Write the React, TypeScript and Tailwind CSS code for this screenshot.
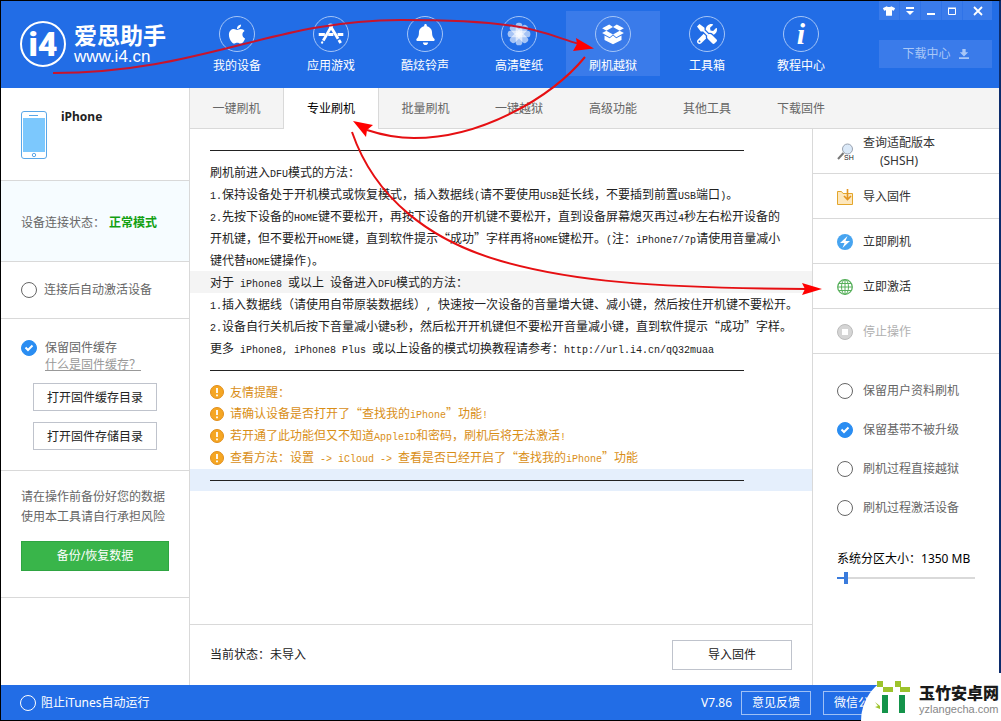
import React, { useState } from "react";
import { FaApple, FaBell, FaTools, FaTshirt } from "react-icons/fa";

const AppStoreIcon = () => (
	<svg viewBox="0 0 36 36" className="h-9 w-9" stroke="white" fill="none">
		<path d="M16 7.500 25.500 23" strokeWidth="3" />
		<path d="M26.300 24.300 28.300 27.600" strokeWidth="3" />
		<path d="M19.800 7.500 9.800 25" strokeWidth="3" />
		<path d="M9.200 26 8 28" strokeWidth="2" />
		<path d="M5 18.500H11.500M15 18.500H20.500M25 18.500H31" strokeWidth="3" />
	</svg>
);

const FlowerIcon = () => (
	<svg viewBox="0 0 36 36" className="h-9 w-9" fill="white">
		{[0, 45, 90, 135, 180, 225, 270, 315].map((angle) => (
			<rect
				key={angle}
				x="14.500"
				y="6"
				width="7"
				height="12"
				rx="3"
				fillOpacity="0.600"
				transform={`rotate(${angle} 18 18)`}
			/>
		))}
	</svg>
);

const BoxIcon = () => (
	<svg viewBox="0 0 36 36" className="h-9 w-9" fill="white">
		<path d="M6.500 12 14 8l4 2.500-7 4z" />
		<path d="M29.500 12 22 8l-4 2.500 7 4z" />
		<path d="M6.500 17 11 14.500l7 4-3.500 3z" />
		<path d="M29.500 17 25 14.500l-7 4 3.500 3z" />
		<path d="M9 19.500l5.500 3 3.500-3 3.500 3 5.500-3v4.800L18 28.800l-9-4.500z" />
	</svg>
);

const InfoIcon = () => (
	<span className="font-['Liberation_Serif',serif] text-3xl leading-none font-bold italic">i</span>
);

const navItems = [
	{ label: "我的设备", icon: <FaApple size={22} /> },
	{ label: "应用游戏", icon: <AppStoreIcon /> },
	{ label: "酷炫铃声", icon: <FaBell size={21} /> },
	{ label: "高清壁纸", icon: <FlowerIcon /> },
	{ label: "刷机越狱", icon: <BoxIcon />, active: true },
	{ label: "工具箱", icon: <FaTools size={20} /> },
	{ label: "教程中心", icon: <InfoIcon /> },
];

const WindowButtons = () => (
	<div className="flex h-[19px] bg-[#3a7bea] text-white">
		<button title="皮肤" className="flex w-[21px] items-center justify-center border-r border-[#2f73e8]">
			<FaTshirt size={12} />
		</button>
		<button title="菜单" className="flex w-[21px] items-center justify-center border-r border-[#2f73e8]">
			<svg viewBox="0 0 10 10" className="h-2.5 w-2.5" fill="white">
				<path d="M1 1h8v2H1zM1 5h8L5 9z" />
			</svg>
		</button>
		<button title="最小化" className="flex w-[21px] items-center justify-center border-r border-[#2f73e8]">
			<svg viewBox="0 0 10 10" className="h-2.5 w-2.5" fill="white">
				<path d="M1 7h8v2H1z" />
			</svg>
		</button>
		<button title="最大化" className="flex w-[21px] items-center justify-center border-r border-[#2f73e8]">
			<svg viewBox="0 0 10 10" className="h-2.5 w-2.5" fill="none" stroke="white">
				<path d="M1.500 2.500h7v6h-7zM1 2h8" />
			</svg>
		</button>
		<button title="关闭" className="flex flex-1 items-center justify-center">
			<svg viewBox="0 0 10 10" className="h-2.5 w-2.5" stroke="white" strokeWidth="1.800">
				<path d="M1 1 9 9M9 1 1 9" />
			</svg>
		</button>
	</div>
);

const Header = () => (
	<header className="flex h-[87px] bg-[#226de6] text-white">
		<div className="flex w-[189px] shrink-0 gap-2 pt-5 pl-[19px]">
			<div className="flex h-[46px] w-[46px] items-center justify-center rounded-full border-2 border-white font-[Roboto,sans-serif] text-[34px] leading-none font-black">
				i4
			</div>
			<div>
				<div className="pt-0.5 text-[23px] leading-6 font-bold">爱思助手</div>
				<div className="font-['Liberation_Sans',sans-serif] text-[17px] leading-5">www.i4.cn</div>
			</div>
		</div>
		<nav className="flex pt-2.5">
			{navItems.map((item) => (
				<a
					key={item.label}
					href="#"
					className={`flex h-[65px] w-[94px] flex-col items-center gap-[5px] pt-[5px] ${item.active ? "bg-[#3a7bea]" : ""}`}
				>
					<span className="flex h-9 w-9 shrink-0 items-center justify-center rounded-full border border-[#a5c5f7]">
						{item.icon}
					</span>
					<span className="leading-[18px]">{item.label}</span>
				</a>
			))}
		</nav>
		<div className="mr-[7px] ml-auto w-[113px] shrink-0">
			<WindowButtons />
			<button className="mt-5 flex h-7 w-full items-center justify-center gap-2 bg-[#3a7bea] text-[#a9c7f7]">
				下载中心
				<svg viewBox="0 0 12 12" className="h-2.5 w-2.5" fill="currentColor">
					<path d="M4 0h4v4h3L6 9 1 4h3zM0 10h12v2H0z" />
				</svg>
			</button>
		</div>
	</header>
);

type CheckProps = {
	label: string;
	defaultChecked?: boolean;
	className?: string;
};

const RoundCheck = ({ label, defaultChecked, className = "gap-[7px]" }: CheckProps) => (
	<label className={`flex items-center ${className}`}>
		<span className="grid h-4 w-4 shrink-0">
			<input
				type="checkbox"
				defaultChecked={defaultChecked}
				className="peer col-start-1 row-start-1 h-4 w-4 appearance-none rounded-full border border-current checked:border-[#2a8df2] checked:bg-[#2a8df2]"
			/>
			<svg
				viewBox="0 0 16 16"
				className="pointer-events-none invisible col-start-1 row-start-1 h-4 w-4 peer-checked:visible"
				fill="none"
				stroke="white"
				strokeWidth="2"
			>
				<path d="M4.500 7.500 7 10l4.500-4.500" />
			</svg>
		</span>
		{label}
	</label>
);

const PhoneIcon = () => (
	<svg viewBox="0 0 26 48" className="h-12 w-[26px]" fill="none" stroke="#5aa7e8">
		<rect x="0.500" y="0.500" width="25" height="47" rx="2.500" fill="white" />
		<path d="M2 7h22v34H2z" fill="#7cc8fd" stroke="none" />
		<path d="M8 4.500h9" />
		<circle cx="13" cy="44" r="1.700" />
	</svg>
);

const Sidebar = () => (
	<aside className="w-[189px] shrink-0 border-r border-[#d9d9d9] text-[#666]">
		<section className="flex h-[93px] gap-3.5 border-b border-[#d9d9d9] pt-[23px] pl-5">
			<PhoneIcon />
			<h2 className="text-xs leading-3 font-bold text-[#222]">iPhone</h2>
		</section>
		<section className="flex h-[81px] items-center gap-1 border-b border-[#d9d9d9] bg-[#f6fcff] pt-1 pl-5">
			<span>设备连接状态：</span>
			<strong className="text-[#12a012]">正常模式</strong>
		</section>
		<section className="flex h-[57px] items-center border-b border-[#d9d9d9] pl-5">
			<RoundCheck label="连接后自动激活设备" />
		</section>
		<section className="flex flex-col border-b border-[#d9d9d9] pt-5 pb-5 pl-5 leading-[17px]">
			<RoundCheck label="保留固件缓存" defaultChecked className="gap-2" />
			<a href="#" className="ml-6 self-start text-[#999] underline">
				什么是固件缓存？
			</a>
			<button className="mt-2.5 ml-3 h-7 w-[124px] border border-[#bfc3cc] text-[#222]">打开固件缓存目录</button>
			<button className="mt-[11px] ml-3 h-7 w-[124px] border border-[#bfc3cc] text-[#222]">打开固件存储目录</button>
		</section>
		<section className="border-b border-[#d9d9d9] px-5 pt-4 pb-[26px]">
			<p className="leading-5">
				请在操作前备份好您的数据
				<br />
				使用本工具请自行承担风险
			</p>
			<button className="mt-3.5 h-[30px] w-full border border-[#2fa542] bg-[#39b54a] text-white">备份/恢复数据</button>
		</section>
	</aside>
);

const tabs = ["一键刷机", "专业刷机", "批量刷机", "一键越狱", "高级功能", "其他工具", "下载固件"];

const TabBar = () => (
	<nav className="flex h-[41px] bg-[#f4f4f4] text-[#666]">
		{tabs.map((tab, index) => (
			<button
				key={tab}
				className={
					index === 1
						? "w-24 border-x border-[#d9d9d9] bg-white pt-px text-black"
						: `border-b border-[#d9d9d9] pt-0.5 ${index === 0 || index === 2 ? "w-[93px]" : "w-[94px]"}`
				}
			>
				{tab}
			</button>
		))}
		<div className="flex-1 border-b border-[#d9d9d9]" />
	</nav>
);

// Latin runs are set in a half-width monospace so they line up with the CJK grid
const MixedText = ({ text }: { text: string }) => (
	<>
		{text.split(/([\x20-\x7e]+)/).map((part, index) =>
			index % 2 ? (
				<span key={index} className="font-['Liberation_Mono',monospace] text-[10px]">
					{part}
				</span>
			) : (
				part
			)
		)}
	</>
);

const steps = [
	"刷机前进入DFU模式的方法：",
	"1.保持设备处于开机模式或恢复模式，插入数据线(请不要使用USB延长线，不要插到前置USB端口)。",
	"2.先按下设备的HOME键不要松开，再按下设备的开机键不要松开，直到设备屏幕熄灭再过4秒左右松开设备的",
	"开机键，但不要松开HOME键，直到软件提示“成功”字样再将HOME键松开。(注：iPhone7/7p请使用音量减小",
	"键代替HOME键操作)。",
	"对于 iPhone8 或以上 设备进入DFU模式的方法：",
	"1.插入数据线（请使用自带原装数据线）, 快速按一次设备的音量增大键、减小键，然后按住开机键不要松开。",
	"2.设备自行关机后按下音量减小键5秒，然后松开开机键但不要松开音量减小键，直到软件提示“成功”字样。",
	"更多 iPhone8, iPhone8 Plus 或以上设备的模式切换教程请参考：http://url.i4.cn/qQ32muaa",
];

const tips = [
	"友情提醒：",
	"请确认设备是否打开了“查找我的iPhone”功能!",
	"若开通了此功能但又不知道AppleID和密码，刷机后将无法激活!",
	"查看方法：设置 -> iCloud -> 查看是否已经开启了“查找我的iPhone”功能",
];

const Divider = ({ className = "" }: { className?: string }) => (
	<div className={`flex h-[22px] items-center px-5 ${className}`}>
		<hr className="w-full max-w-[534px] border-[#222]" />
	</div>
);

const WarnIcon = () => (
	<svg viewBox="0 0 14 14" className="h-3.5 w-3.5 shrink-0">
		<circle cx="7" cy="7" r="6.500" fill="#f5a623" stroke="#e08e1b" />
		<path d="M7 3v5M7 9.500v1.800" stroke="white" strokeWidth="1.800" />
	</svg>
);

const Instructions = () => (
	<div className="flex-1 pt-2.5 font-['Noto_Sans_CJK_SC',sans-serif] leading-[22px] whitespace-nowrap text-[#222]">
		<Divider />
		{steps.map((step, index) => (
			<p key={step} className={`h-[22px] pl-5 ${index === 5 ? "bg-[#f4f4f4]" : ""}`}>
				<MixedText text={step} />
			</p>
		))}
		<Divider />
		{tips.map((tip) => (
			<p key={tip} className="flex h-[22px] items-center gap-1.5 pl-5 text-[#d98e16]">
				<WarnIcon />
				<span className="whitespace-pre">
					<MixedText text={tip} />
				</span>
			</p>
		))}
		<Divider className="bg-[#e5effc]" />
	</div>
);

const SearchIcon = () => (
	<svg viewBox="0 0 16 16" className="h-4 w-4 overflow-visible" fill="none">
		<circle cx="10.500" cy="5" r="5" fill="#dbe9f8" stroke="#9aa3b0" />
		<path d="M6.500 9 1 15" stroke="#777" strokeWidth="2" />
		<text x="7" y="15.500" fontSize="7" fill="#222" fontFamily="Liberation Sans">
			SH
		</text>
	</svg>
);

const ImportIcon = () => (
	<svg viewBox="0 0 16 16" className="h-4 w-4" fill="none" stroke="#e3a62b">
		<path d="M.500 2.500h4l1.500 2h9.500v11H.500z" fill="#fde7bd" />
		<path d="M10.500 0v10M7 7l3.500 3.500L14 7" strokeWidth="1.600" stroke="#e39520" />
	</svg>
);

const FlashIcon = () => (
	<svg viewBox="0 0 16 16" className="h-4 w-4">
		<circle cx="8" cy="8" r="8" fill="#47a4f0" />
		<path d="M10.500 2 3 9h4.500L5.500 14 13 7H8.500z" fill="white" />
	</svg>
);

const GlobeIcon = () => (
	<svg viewBox="0 0 16 16" className="h-4 w-4" fill="none" stroke="#58b05c">
		<circle cx="8" cy="8" r="7.300" strokeWidth="1.300" />
		<ellipse cx="8" cy="8" rx="3.500" ry="7.300" />
		<path d="M8 1v14M1 8h14M2 4.500h12M2 11.500h12" />
	</svg>
);

const StopIcon = () => (
	<svg viewBox="0 0 16 16" className="h-4 w-4">
		<circle cx="8" cy="8" r="7.500" fill="#d5d5d5" stroke="#bbb" />
		<path d="M5 5h6v6H5z" fill="white" />
	</svg>
);

const actions = [
	{ label: "查询适配版本", sub: "(SHSH)", icon: <SearchIcon /> },
	{ label: "导入固件", icon: <ImportIcon /> },
	{ label: "立即刷机", icon: <FlashIcon /> },
	{ label: "立即激活", icon: <GlobeIcon /> },
	{ label: "停止操作", icon: <StopIcon />, disabled: true },
];

const MIN_SIZE = 1000;
const MAX_SIZE = 8000;

const ActionPanel = () => {
	const [size, setSize] = useState(1350);
	const percent = ((size - MIN_SIZE) / (MAX_SIZE - MIN_SIZE)) * 100;

	return (
		<aside className="w-[187px] shrink-0 border-l border-[#d9d9d9]">
			{actions.map((action) => (
				<button
					key={action.label}
					disabled={action.disabled}
					className="flex h-[45px] w-full items-center gap-2.5 border-b border-[#d9d9d9] pt-0.5 pl-6 leading-[18px] text-[#333] disabled:text-[#b0b0b0]"
				>
					{action.icon}
					<span>
						{action.label}
						{action.sub && <span className="block">{action.sub}</span>}
					</span>
				</button>
			))}
			<div className="flex flex-col gap-[21px] pt-7 pl-6 leading-[18px] text-[#666]">
				<RoundCheck label="保留用户资料刷机" className="gap-2.5" />
				<RoundCheck label="保留基带不被升级" defaultChecked className="gap-2.5" />
				<RoundCheck label="刷机过程直接越狱" className="gap-2.5" />
				<RoundCheck label="刷机过程激活设备" className="gap-2.5" />
			</div>
			<div className="pt-8 pr-6 pl-6 whitespace-nowrap text-black">
				<label htmlFor="partition" className="block leading-5">
					系统分区大小：{size} MB
				</label>
				<input
					id="partition"
					type="range"
					min={MIN_SIZE}
					max={MAX_SIZE}
					step={50}
					value={size}
					onChange={(e) => setSize(Number(e.target.value))}
					className="mt-2 block h-0.5 w-full appearance-none [&::-webkit-slider-thumb]:h-3 [&::-webkit-slider-thumb]:w-1 [&::-webkit-slider-thumb]:appearance-none [&::-webkit-slider-thumb]:bg-[#3a7bdc]"
					style={{ background: `linear-gradient(to right, #3a7bdc ${percent}%, #d9d9d9 ${percent}%)` }}
				/>
			</div>
		</aside>
	);
};

const Footer = () => (
	<footer className="flex h-[35px] items-center bg-[#226de6] pl-[19px] text-white">
		<RoundCheck label="阻止iTunes自动运行" className="gap-[5px]" />
		<span className="mr-[9px] ml-auto">V7.86</span>
		<button className="mr-3 h-6 w-[70px] border border-[#9fc0f5]">意见反馈</button>
		<button className="mr-[94px] h-6 w-[82px] border border-[#9fc0f5]">微信公众号</button>
	</footer>
);

const Arrows = () => (
	<svg
		width="840"
		height="300"
		className="pointer-events-none absolute top-0 left-0"
		fill="none"
		stroke="#c8142c"
		strokeWidth="2"
	>
		<path d="M52 72C200 72 270 19 400 19S540 32 578 43" />
		<g stroke="#e60f12">
			<path d="M584 56C550 97 480 137 413 137Q390 137 366 129" />
			<path d="M351 131C374 198 430 240 500 260S650 287 805 288" />
		</g>
		<g fill="#f00" stroke="none">
			<path d="M593 47.500 572 50l4-7-1-6z" />
			<path d="M352 120l20 4-6 5-1 7z" />
			<path d="M821 288l-20 6 3-6-3-6z" />
		</g>
	</svg>
);

const Watermark = () => (
	<div className="absolute -right-0.5 -bottom-px flex h-12 w-[140px] items-center gap-2 rounded-tl-[48px] bg-white pl-3.5">
		<svg viewBox="0 0 36 32" className="h-8 w-9 shrink-0">
			<path d="M2 0h6v6H2zM8 6h10v5H8zM20 0h6v6h-6zM25 6h10v5H25z" fill="#9dc32c" />
			<path d="M7 14h6v18H7zM24 14h6v18h-6z" fill="#14934a" />
			<path d="M0 21l5 4v3l-5-2 3-1z" fill="#9dc32c" />
		</svg>
		<div className="pt-1 whitespace-nowrap">
			<div className="text-base leading-5 font-black text-[#1a1a1a]">玉竹安卓网</div>
			<div className="font-['Liberation_Sans',sans-serif] text-[11px] leading-3 text-[#888]">yzlangecha.com</div>
		</div>
	</div>
);

export default function App() {
	return (
		<div className="relative flex min-h-screen flex-col overflow-clip border border-r-2 border-black border-r-[#0c2c6c] bg-white font-['Noto_Sans','Noto_Sans_CJK_SC',sans-serif] text-xs [overflow-clip-margin:border-box]">
			<Header />
			<div className="flex flex-1">
				<Sidebar />
				<div className="flex min-w-0 flex-1 flex-col">
					<TabBar />
					<div className="flex flex-1">
						<main className="flex min-w-0 flex-1 flex-col">
							<Instructions />
							<div className="flex h-[61px] items-center justify-between border-t border-[#d9d9d9] pr-5 pl-5 text-[#222]">
								<span>当前状态：未导入</span>
								<button className="h-[30px] w-[120px] border border-[#bfc3cc]">导入固件</button>
							</div>
						</main>
						<ActionPanel />
					</div>
				</div>
			</div>
			<Footer />
			<Arrows />
			<Watermark />
		</div>
	);
}
